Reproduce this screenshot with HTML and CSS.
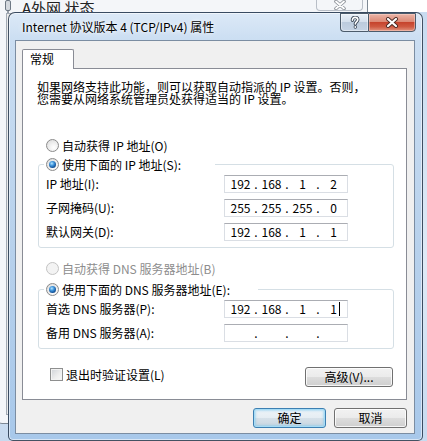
FILE: index.html
```html
<!DOCTYPE html>
<html lang="zh-CN">
<head>
<meta charset="utf-8">
<title>Internet 协议版本 4 (TCP/IPv4) 属性</title>
<link rel="stylesheet" href="styles.css">
</head>
<body>
<div class="desk">
  <div class="bgwin">
    <div class="bg-title">
      <svg class="bg-icon" width="10" height="16" viewBox="0 0 10 16"><rect x="2.5" y="0.5" width="5" height="10" rx="1.5" fill="#d3d8de" stroke="#6f7985"/><path d="M5 10.5V15" stroke="#6f7985" stroke-width="1.4"/></svg>
      <span class="bg-text">A外网 状态</span>
      <div class="bg-close"><svg width="14" height="10" viewBox="0 0 14 10"><path d="M3 1.5L11 8.5M11 1.5L3 8.5" stroke="#8c9198" stroke-width="3.6" stroke-linecap="round"/><path d="M3 1.5L11 8.5M11 1.5L3 8.5" stroke="#fff" stroke-width="1.8" stroke-linecap="round"/></svg></div>
    </div>
    <div class="bg-client"></div>
  </div>

  <div class="dialog">
    <div class="titlebar">
      <span class="title">Internet 协议版本 4 (TCP/IPv4) 属性</span>
      <div class="caps">
        <div class="cap help"><svg width="10" height="13" viewBox="0 0 10 13"><path d="M2.4 4.2C2.4 2.2 3.6 1.4 5.1 1.4C6.8 1.4 7.8 2.4 7.8 3.8C7.8 5.6 5.3 5.7 5.3 8" fill="none" stroke="#3a4757" stroke-width="3.4" stroke-linecap="round"/><circle cx="5.3" cy="11" r="1.7" fill="#3a4757"/><path d="M2.4 4.2C2.4 2.2 3.6 1.4 5.1 1.4C6.8 1.4 7.8 2.4 7.8 3.8C7.8 5.6 5.3 5.7 5.3 8" fill="none" stroke="#fff" stroke-width="1.6" stroke-linecap="round"/><circle cx="5.3" cy="11" r="0.9" fill="#fff"/></svg></div>
        <div class="cap close"><svg width="14" height="11" viewBox="0 0 14 11"><path d="M3 2L11 9M11 2L3 9" stroke="#4a2a24" stroke-width="4" stroke-linecap="round"/><path d="M3 2L11 9M11 2L3 9" stroke="#fff" stroke-width="2.2" stroke-linecap="round"/></svg></div>
      </div>
    </div>

    <div class="client">
      <div class="tabs"><div class="tab">常规</div></div>
      <div class="panel">
        <p class="intro">如果网络支持此功能，则可以获取自动指派的 IP 设置。否则，<br>您需要从网络系统管理员处获得适当的 IP 设置。</p>

        <div class="opt out"><span class="radio"></span><span>自动获得 IP 地址(O)</span></div>
        <fieldset class="group">
          <legend class="opt lg-ip"><span class="radio on"></span><span>使用下面的 IP 地址(S):</span></legend>
          <div class="rows">
            <span>IP 地址(I):</span>
            <div class="ip"><span class="o">192</span><span class="d">.</span><span class="o">168</span><span class="d">.</span><span class="o">1</span><span class="d">.</span><span class="o">2</span></div>
            <span>子网掩码(U):</span>
            <div class="ip"><span class="o">255</span><span class="d">.</span><span class="o">255</span><span class="d">.</span><span class="o">255</span><span class="d">.</span><span class="o">0</span></div>
            <span>默认网关(D):</span>
            <div class="ip"><span class="o">192</span><span class="d">.</span><span class="o">168</span><span class="d">.</span><span class="o">1</span><span class="d">.</span><span class="o">1</span></div>
          </div>
        </fieldset>

        <div class="opt out dis gap2"><span class="radio dim"></span><span>自动获得 DNS 服务器地址(B)</span></div>
        <fieldset class="group g2">
          <legend class="opt lg-dns"><span class="radio on"></span><span>使用下面的 DNS 服务器地址(E):</span></legend>
          <div class="rows">
            <span>首选 DNS 服务器(P):</span>
            <div class="ip"><span class="o">192</span><span class="d">.</span><span class="o">168</span><span class="d">.</span><span class="o">1</span><span class="d">.</span><span class="o caret">1</span></div>
            <span>备用 DNS 服务器(A):</span>
            <div class="ip"><span class="o"></span><span class="d">.</span><span class="o"></span><span class="d">.</span><span class="o"></span><span class="d">.</span><span class="o"></span></div>
          </div>
        </fieldset>

        <div class="foot">
          <div class="check"><span class="box"></span><span>退出时验证设置(L)</span></div>
          <div class="btn adv">高级(V)...</div>
        </div>
      </div>
      <div class="actions">
        <div class="btn default">确定</div>
        <div class="btn">取消</div>
      </div>
    </div>
  </div>
</div>
</body>
</html>
```

FILE: styles.css
```css
* { box-sizing: border-box; }
html, body { margin: 0; padding: 0; }
body {
  width: 427px;
  height: 441px;
  overflow: hidden;
  background: #fff;
  font-family: "Noto Sans CJK SC", "Microsoft YaHei", sans-serif;
  font-size: 12px;
  color: #000;
}
.desk {
  position: relative;
  width: 427px;
  height: 441px;
  overflow: hidden;
  background: linear-gradient(#ffffff 0, #ffffff 12px, #c9dcf0 12px, #dfeaf6 60%, #c7daef 100%);
}

/* background window */
.bgwin {
  position: absolute;
  left: -4px;
  top: -20px;
  width: 372px;
  height: 444px;
  background: #f4f6f9;
  border: 1px solid #7d8894;
  border-radius: 6px;
  padding: 0 8px 8px 9px;
  display: flex;
  flex-direction: column;
}
.bg-title {
  height: 32px;
  display: flex;
  align-items: flex-start;
  padding-top: 19px;
}
.bg-icon { margin-left: -3px; margin-right: 9px; flex: none; margin-top: -0px; }
.bg-text { font-size: 15px; line-height: 18px; color: #222; margin-top: -1px; }
.bg-close {
  margin-left: auto;
  margin-right: -4px;
  margin-top: -19px;
  width: 47px;
  height: 30px;
  border: 1px solid #b8bec7;
  border-top: none;
  border-radius: 0 0 4px 4px;
  display: flex;
  justify-content: center;
  align-items: flex-start;
  padding-top: 19px;
}
.bg-client {
  flex: 1;
  border: 1px solid #a3abb5;
  background: #ececec;
}

/* dialog */
.dialog {
  position: absolute;
  left: 8px;
  top: 12px;
  width: 415px;
  height: 429px;
  border: 1px solid rgba(25, 40, 58, 0.78);
  border-radius: 7px 7px 5px 5px;
  background: linear-gradient(180deg, #dce9f7 0px, #cbdef2 27px, #b7d1ec 55%, #a8c8ea 100%);
  box-shadow: inset 0 0 0 1px rgba(255, 255, 255, 0.55);
  padding: 0 7px 6px 6px;
  display: flex;
  flex-direction: column;
}
.titlebar {
  height: 27px;
  display: flex;
  align-items: center;
  flex: none;
}
.title {
  padding-left: 7px;
  line-height: 16px;
  margin-top: 1px;
  text-shadow: 0 0 6px #fff, 0 0 3px rgba(255, 255, 255, 0.8);
}
.caps {
  margin-left: auto;
  margin-right: -1px;
  align-self: flex-start;
  display: flex;
}
.cap {
  height: 19px;
  border: 1px solid #4c5b6b;
  display: flex;
  align-items: center;
  justify-content: center;
}
.help {
  width: 28px;
  border-right: none;
  border-radius: 0 0 0 4px;
  background: linear-gradient(#e9f0f8 0%, #d5e0ed 45%, #bccbdd 50%, #c6d4e5 100%);
  box-shadow: inset 0 0 0 1px rgba(255, 255, 255, 0.45);
}
.close {
  width: 48px;
  border-radius: 0 0 4px 0;
  background: linear-gradient(#ebb5a8 0%, #dc8a76 45%, #c6442d 50%, #cf5a42 75%, #e29580 100%);
  box-shadow: inset 0 0 0 1px rgba(255, 220, 210, 0.45);
}

.client {
  flex: 1;
  border: 1px solid #7b8da2;
  background: #f0f0f0;
  padding: 8px 7px 5px 6px;
  display: flex;
  flex-direction: column;
}
.tabs {
  display: flex;
  height: 19px;
  position: relative;
  z-index: 1;
  flex: none;
}
.tab {
  width: 52px;
  height: 20px;
  border: 1px solid #898c95;
  border-bottom: none;
  border-radius: 2px 2px 0 0;
  background: #fff;
  padding-left: 7px;
  line-height: 18px;
}
.panel {
  width: 385px;
  background: #fff;
  border: 1px solid #898c95;
  padding: 12px 2px 12px 15px;
  flex: none;
}
.intro {
  margin: 0 0 0 -1px;
  line-height: 12px;
  white-space: nowrap;
}

.opt {
  display: flex;
  align-items: center;
  height: 16px;
  gap: 3px;
  white-space: nowrap;
}
.opt.out { margin-left: 8px; margin-top: 32px; }
.opt.gap2 { margin-top: 12px; }
.opt.dis { color: #8d8d8d; }

.radio {
  position: relative;
  flex: none;
  width: 13px;
  height: 13px;
  border-radius: 50%;
  border: 1px solid #8b8b8b;
  background: radial-gradient(circle at 62% 68%, #ffffff 0%, #f3f3f3 35%, #d6d6d6 100%);
}
.radio.on::after {
  content: "";
  position: absolute;
  left: 2px;
  top: 2px;
  width: 7px;
  height: 7px;
  border-radius: 50%;
  background: radial-gradient(circle at 40% 35%, #b4e6ff 0%, #3f94db 35%, #104f96 70%, #0a3463 100%);
}
.radio.dim {
  border-color: #c3c3c3;
  background: #f3f3f3;
}

.group {
  margin: 3px 0 0 0;
  padding: 3px 0 6px 5px;
  border: 1px solid #d5dfe5;
  border-radius: 3px;
  width: 356px;
  min-width: 0;
}
.group.g2 { margin-top: 5px; }
.group legend {
  padding: 0 0 0 2px;
}
.lg-ip { width: 171px; }
.lg-dns { width: 214px; }

.rows {
  display: grid;
  grid-template-columns: 178px 124px;
  row-gap: 6px;
  align-items: center;
  margin-left: 2px;
  white-space: nowrap;
  line-height: 16px;
}
.ip {
  height: 18px;
  border: 1px solid #dadee4;
  border-top-color: #abadb3;
  background: #fff;
  display: flex;
  align-items: center;
  padding-left: 3px;
  line-height: 16px;
}
.ip .o { width: 25px; text-align: center; }
.ip .d { width: 6px; text-align: center; }
.ip .caret { position: relative; }
.ip .caret::after {
  content: "";
  position: absolute;
  top: 1px;
  right: 6px;
  width: 1px;
  height: 14px;
  background: #000;
}

.foot {
  display: flex;
  justify-content: space-between;
  align-items: flex-start;
  margin-top: 18px;
  padding-left: 12px;
  padding-right: 1px;
  width: 356px;
}
.check {
  display: flex;
  align-items: center;
  gap: 3px;
  height: 13px;
  margin-top: 1px;
  line-height: 13px;
}
.box {
  flex: none;
  width: 13px;
  height: 13px;
  border: 1px solid #8e8f8f;
  background: linear-gradient(135deg, #cfd2d7 0%, #eeeeee 60%, #f8f8f8 100%);
  box-shadow: inset 0 0 0 1px #f2f2f2;
}

.btn {
  height: 20px;
  border: 1px solid #707070;
  border-radius: 3px;
  background: linear-gradient(#f2f2f2 0%, #ebebeb 49%, #dddddd 50%, #cfcfcf 100%);
  box-shadow: inset 0 0 0 1px rgba(255, 255, 255, 0.8);
  display: flex;
  align-items: center;
  justify-content: center;
  line-height: 16px;
  width: 73px;
}
.btn.adv { width: 88px; }
.btn.default {
  border-color: #3c7fb1;
  background: linear-gradient(#eef4f8 0%, #e5edf3 49%, #d6e1e9 50%, #c9d6e0 100%);
  box-shadow: inset 0 0 0 1px #a6dcf6, inset 0 0 2px 2px rgba(110, 195, 238, 0.45);
}
.actions {
  display: flex;
  justify-content: flex-end;
  gap: 8px;
  margin-top: 8px;
  flex: none;
}
```
